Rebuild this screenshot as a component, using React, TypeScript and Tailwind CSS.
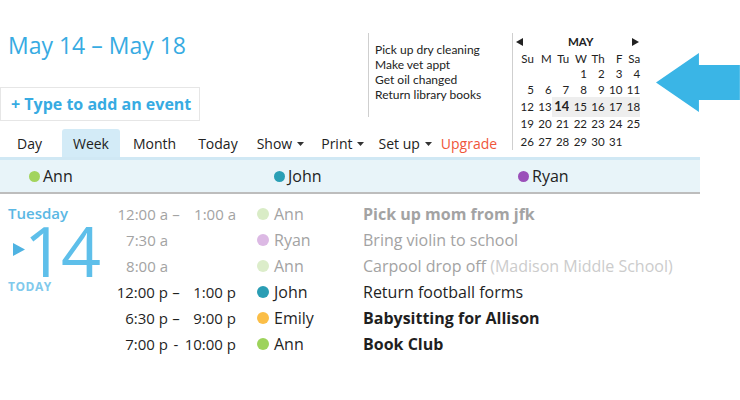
import React from "react";

const todos = ["Pick up dry cleaning", "Make vet appt", "Get oil changed", "Return library books"];

const weeks: (number | null)[][] = [
  [null, null, null, 1, 2, 3, 4],
  [5, 6, 7, 8, 9, 10, 11],
  [12, 13, 14, 15, 16, 17, 18],
  [19, 20, 21, 22, 23, 24, 25],
  [26, 27, 28, 29, 30, 31, null],
];
const rowHeights = ["h-[16px]", "h-[16px]", "h-[18px]", "h-[18px]", "h-[18px]"];

const people = [
  { name: "Ann", color: "#a2d45d" },
  { name: "John", color: "#2a9fb5" },
  { name: "Ryan", color: "#9b50b9" },
];

const events = [
  { start: "12:00 a", sep: "–", end: "1:00 a", dot: "#d9ecc6", name: "Ann", title: "Pick up mom from jfk", bold: true, past: true },
  { start: "7:30 a", dot: "#dcb9e4", name: "Ryan", title: "Bring violin to school", past: true },
  { start: "8:00 a", dot: "#dcedca", name: "Ann", title: "Carpool drop off", note: "(Madison Middle School)", past: true },
  { start: "12:00 p", sep: "–", end: "1:00 p", dot: "#2a9db4", name: "John", title: "Return football forms" },
  { start: "6:30 p", sep: "–", end: "9:00 p", dot: "#fbbe47", name: "Emily", title: "Babysitting for Allison", bold: true },
  { start: "7:00 p", sep: "-", end: "10:00 p", dot: "#9dd35b", name: "Ann", title: "Book Club", bold: true },
];

const Caret = () => (
  <svg width="7" height="4" viewBox="0 0 7 4" className="ml-[5px] mt-[2px]">
    <polygon points="0,0 7,0 3.5,4" fill="#333" />
  </svg>
);

const MiniCalendar = () => (
  <div className="mt-[33px] h-[117px] border-l border-[#cfcfcf] pl-[3px] pt-[1px] font-['Lato',sans-serif] text-[11.5px] text-[#222]">
    <div className="flex h-[16px] w-[123px] items-center justify-between">
      <svg width="7" height="8" viewBox="0 0 7 8">
        <polygon points="7,0 7,8 0,4" fill="#222" />
      </svg>
      <span className="ml-[6px] text-[11.5px] font-bold">MAY</span>
      <svg width="7" height="8" viewBox="0 0 7 8">
        <polygon points="0,0 0,8 7,4" fill="#222" />
      </svg>
    </div>
    <div className="grid h-[15px] w-[124px] grid-cols-7 items-center text-right">
      {["Su", "M", "Tu", "W", "Th", "F", "Sa"].map((d) => (
        <span key={d}>{d}</span>
      ))}
    </div>
    {weeks.map((week, wi) => (
      <div key={wi} className={`grid w-[124px] grid-cols-7 items-center text-right ${rowHeights[wi]}`}>
        {week.map((day, di) => (
          <span
            key={di}
            className={`flex h-full items-center justify-end ${wi === 2 && di >= 2 ? "bg-[#eeeeee]" : ""} ${
              day === 14 ? "text-[13px] font-bold" : ""
            }`}
          >
            {day ?? ""}
          </span>
        ))}
      </div>
    ))}
  </div>
);

export default function App() {
  return (
    <div className="h-[400px] w-[740px] overflow-hidden bg-white font-['Open_Sans',sans-serif] text-[#222]">
      {/* Header */}
      <div className="flex h-[157px] items-start">
        <div className="w-[513px]">
          <div className="flex h-[129px] items-start">
            <div className="w-[368px]">
              <h1 className="ml-[8px] mt-[30px] text-[23px] leading-[30px] text-[#37abe2]">May 14 – May 18</h1>
              <div className="mt-[27px] flex h-[34px] w-[200px] items-center border border-[#e6e6e6] pl-[10px] text-[16px] font-bold text-[#37abe2]">
                + Type to add an event
              </div>
            </div>
            <div className="mt-[33px] h-[84px] w-px bg-[#cfcfcf]" />
            <ul className="ml-[6px] mt-[42px] font-['Lato',sans-serif] text-[12px] leading-[15px] text-[#222]">
              {todos.map((t) => (
                <li key={t}>{t}</li>
              ))}
            </ul>
          </div>
          <div className="flex h-[28px] items-center whitespace-nowrap text-[14px] text-[#222]">
            <span className="ml-[17px]">Day</span>
            <span className="ml-[20px] flex h-full items-center rounded-t-[3px] bg-[#d3ebf7] px-[11px]">Week</span>
            <span className="ml-[13px]">Month</span>
            <span className="ml-[22px]">Today</span>
            <span className="ml-[19px] flex items-center">
              Show
              <Caret />
            </span>
            <span className="ml-[17px] flex items-center">
              Print
              <Caret />
            </span>
            <span className="ml-[14px] flex items-center">
              Set up
              <Caret />
            </span>
            <span className="ml-[9px] text-[#f0563a]">Upgrade</span>
          </div>
        </div>
        <MiniCalendar />
        <svg width="84" height="60" viewBox="0 0 84 60" className="ml-[16px] mt-[53px]">
          <polygon points="0,29.5 43,0 43,12 84,12 84,47 43,47 43,59" fill="#3ab5e6" />
        </svg>
      </div>

      {/* People band */}
      <div className="grid h-[37px] w-[700px] grid-cols-[245px_244px_1fr] items-center border-t-[3px] border-b-2 border-t-[#d0e8f4] border-b-[#bdbdbd] bg-[#e8f4f9] pl-[29px] text-[16px]">
        {people.map((p) => (
          <div key={p.name} className="flex items-center">
            <span className="h-[11px] w-[11px] rounded-full" style={{ backgroundColor: p.color }} />
            <span className="ml-[3px]">{p.name}</span>
          </div>
        ))}
      </div>

      {/* Day agenda */}
      <div className="flex pt-[7px]">
        <div className="w-[110px] pl-[8px]">
          <div className="mt-[2px] text-[15px] font-semibold leading-[20px] text-[#5bb8e4]">Tuesday</div>
          <div className="flex h-[54px] items-center">
            <svg width="12" height="13" viewBox="0 0 12 13" className="ml-[5px] mt-[-2px]">
              <polygon points="0,0 12,6.5 0,13" fill="#4fb3e2" />
            </svg>
            <span className="ml-[-1px] text-[70px] font-normal leading-[54px] tracking-[-3px] text-[#5ebfea]">14</span>
          </div>
          <div className="mt-[2px] text-[12px] font-bold leading-[16px] tracking-[0.5px] text-[#80c9ec]">TODAY</div>
        </div>
        <div>
          {events.map((e, i) => (
            <div
              key={i}
              className={`grid h-[26px] grid-cols-[58px_16px_52px_21px_106px_1fr] items-center whitespace-nowrap ${
                e.past ? "text-[#a3a3a3]" : "text-[#1f1f1f]"
              }`}
            >
              <span className="text-right text-[15px]">{e.start}</span>
              <span className="text-center text-[15px]">{e.sep ?? ""}</span>
              <span className="text-right text-[15px]">{e.end ?? ""}</span>
              <span />
              <span className="flex items-center text-[16px]">
                <span className="h-[12px] w-[12px] rounded-full" style={{ backgroundColor: e.dot }} />
                <span className="ml-[5px]">{e.name}</span>
              </span>
              <span className={`text-[16px] ${e.bold ? "font-bold" : ""}`}>
                {e.title}
                {e.note && <span className="font-normal text-[#cccccc]"> {e.note}</span>}
              </span>
            </div>
          ))}
        </div>
      </div>
    </div>
  );
}
